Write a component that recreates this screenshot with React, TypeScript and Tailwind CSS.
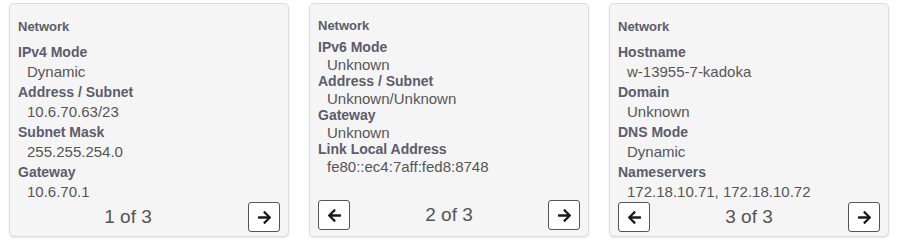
import React from "react";
import { FaArrowLeft, FaArrowRight } from "react-icons/fa";

type Row = { label: string; value: string };

type CardProps = {
  rows: Row[];
  page: number;
  total: number;
  compact?: boolean;
};

const PagerButton: React.FC<{ dir: "left" | "right" }> = ({ dir }) => (
  <button className="flex h-[30px] w-[32px] items-center justify-center rounded-[3px] border border-[#555] bg-white text-[#1a1a1a]">
    {dir === "left" ? <FaArrowLeft size={15} /> : <FaArrowRight size={15} />}
  </button>
);

const NetworkCard: React.FC<CardProps> = ({ rows, page, total, compact }) => {
  return (
    <div
      className={
        "flex h-[234px] w-[280px] flex-col rounded-[5px] border border-[#dcdcdc] bg-[#f5f5f5] px-[8px] pb-[6px] shadow-[0_1px_2px_rgba(0,0,0,0.1)] " +
        (compact ? "pt-[14px]" : "pt-[15px]")
      }
    >
      <div className="text-[13px] font-bold leading-[16px] text-[#5c5c6c]">Network</div>
      <div className={compact ? "mt-[5px] leading-[17px]" : "mt-[7px] leading-[20px]"}>
        {rows.map((r) => (
          <div key={r.label}>
            <div className="text-[14px] font-bold text-[#5c5c6c]">{r.label}</div>
            <div className="pl-[9px] text-[15px] text-[#555]">{r.value}</div>
          </div>
        ))}
      </div>
      <div className="mt-auto flex items-center">
        {page > 1 ? <PagerButton dir="left" /> : null}
        <div
          className={
            "flex-1 text-center text-[19px] leading-[30px] text-[#555] " + (page === 1 ? "pr-[10px]" : "")
          }
        >
          {page} of {total}
        </div>
        <PagerButton dir="right" />
      </div>
    </div>
  );
};

export default function App() {
  return (
    <div
      className="flex h-[242px] w-[897px] gap-[20px] bg-white pl-[9px] pt-[3px]"
      style={{ fontFamily: '"Liberation Sans", Arial, sans-serif' }}
    >
      <NetworkCard
        page={1}
        total={3}
        rows={[
          { label: "IPv4 Mode", value: "Dynamic" },
          { label: "Address / Subnet", value: "10.6.70.63/23" },
          { label: "Subnet Mask", value: "255.255.254.0" },
          { label: "Gateway", value: "10.6.70.1" },
        ]}
      />
      <NetworkCard
        page={2}
        total={3}
        compact
        rows={[
          { label: "IPv6 Mode", value: "Unknown" },
          { label: "Address / Subnet", value: "Unknown/Unknown" },
          { label: "Gateway", value: "Unknown" },
          { label: "Link Local Address", value: "fe80::ec4:7aff:fed8:8748" },
        ]}
      />
      <NetworkCard
        page={3}
        total={3}
        rows={[
          { label: "Hostname", value: "w-13955-7-kadoka" },
          { label: "Domain", value: "Unknown" },
          { label: "DNS Mode", value: "Dynamic" },
          { label: "Nameservers", value: "172.18.10.71, 172.18.10.72" },
        ]}
      />
    </div>
  );
}
